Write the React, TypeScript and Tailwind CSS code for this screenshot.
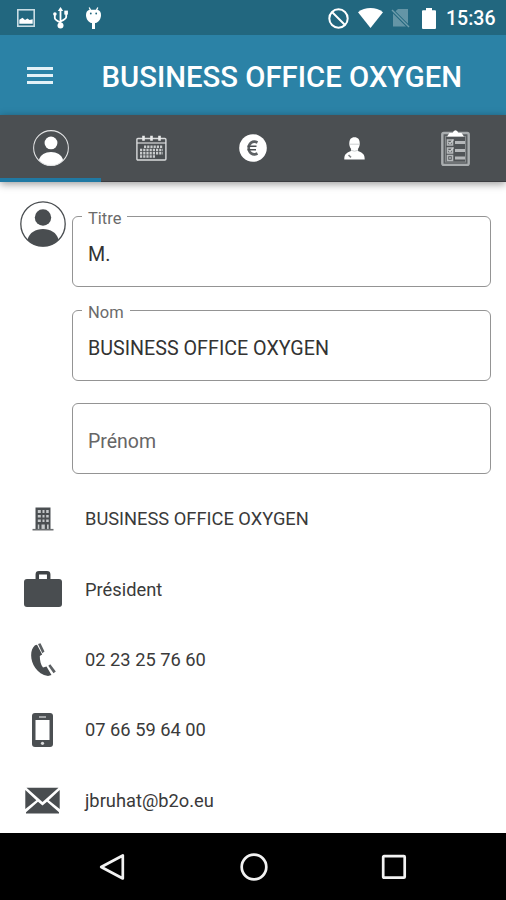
import React from "react";

const StatusBar = () => {
  return (
    <div className="flex h-[35px] items-center justify-between bg-[#22677f] pt-px pr-[11px] pl-[17px] text-white">
      <div className="flex items-center">
        <svg width="18" height="18" viewBox="0 0 18 18">
          <rect x="0.8" y="0.8" width="16.4" height="16.4" fill="none" stroke="#c9dde4" strokeWidth="1.6" />
          <path d="M2.300 14.800v-4l3.200-2 2.500 2.300 2.500-1.600 2 1.600 3.200-.8v4.500z" fill="#fff" />
        </svg>
        <svg className="ml-[18px]" width="15" height="22" viewBox="0 0 15 22">
          <path d="M7.500 2v17M1.800 8v3q0 2 5.700 4.500M13.200 6v4q0 2-5.700 4.500" fill="none" stroke="#fff" strokeWidth="1.8" />
          <path d="M7.500 0l2.700 4H4.800z" fill="#fff" />
          <circle cx="1.9" cy="7" r="1.8" fill="#fff" />
          <rect x="11.3" y="3.600" width="3.600" height="4" fill="#fff" />
          <circle cx="7.500" cy="18.500" r="3" fill="#fff" />
        </svg>
        <svg className="ml-[18px]" width="15" height="23" viewBox="0 0 15 23">
          <path d="M3.200.5l1.500 3M11.800.5l-1.500 3" stroke="#fff" strokeWidth="1.300" />
          <path d="M0 8q0-4.500 3.500-5.300h8Q15 3.500 15 8c0 4-2.500 7.500-5.500 8h-4C2.500 15.500 0 12 0 8z" fill="#fff" />
          <path d="M7.500 15v7" stroke="#fff" strokeWidth="3" />
          <circle cx="4.800" cy="6.500" r="0.9" fill="#22677f" />
          <circle cx="10.200" cy="6.500" r="0.9" fill="#22677f" />
        </svg>
      </div>
      <div className="flex items-center">
        <svg width="21" height="21" viewBox="0 0 21 21">
          <circle cx="10.500" cy="10.500" r="9.200" fill="none" stroke="#fff" strokeWidth="2" />
          <path d="M4 4l13 13" stroke="#fff" strokeWidth="2" />
        </svg>
        <svg className="ml-[9px]" width="25" height="20" viewBox="0 0 25 20">
          <path d="M12.500 20L0 4.200Q5.500 0 12.500 0T25 4.200z" fill="#fff" />
        </svg>
        <svg className="ml-[8px]" width="19" height="20" viewBox="0 0 19 20">
          <path d="M7 1H17v14.800L4.500 3.300zM2 5.500L15 18.500H2z" fill="#6495a6" />
          <path d="M1 2l17 17" stroke="#6f9dac" strokeWidth="1.500" />
        </svg>
        <svg className="ml-[12px]" width="14" height="21" viewBox="0 0 14 21">
          <path d="M4 0h6v2.300h3q1 0 1 1V20q0 1-1 1H1q-1 0-1-1V3.300q0-1 1-1h3z" fill="#fff" />
        </svg>
        <span className="ml-[10px] w-[49px] pt-[2px] text-[19.500px] leading-none font-medium">15:36</span>
      </div>
    </div>
  );
};

const AppBar = () => {
  return (
    <div className="flex h-20 items-center bg-[#2b82a6] pl-[27px]">
      <button className="flex w-[26px] flex-col gap-[4px]">
        <span className="h-[3px] bg-[#e3f1f7]" />
        <span className="h-[3px] bg-[#e3f1f7]" />
        <span className="h-[3px] bg-[#e3f1f7]" />
      </button>
      <h1 className="ml-[48.500px] pt-[5px] text-[29.300px] leading-none font-medium whitespace-nowrap text-white">
        BUSINESS OFFICE OXYGEN
      </h1>
    </div>
  );
};

type UserIconProps = { size: number; color: string; stroke: string };

const UserIcon = ({ size, color, stroke }: UserIconProps) => {
  return (
    <svg width={size} height={size} viewBox="0 0 46 46" className="shrink-0">
      <path d="M7.500 38.500C9.500 31.500 15.500 28 23 28s13.500 3.500 15.500 10.500Q32 45.500 23 45.500T7.500 38.500z" fill={color} />
      <circle cx="23" cy="16.500" r="8.200" fill={color} />
      <circle cx="23" cy="23" r="22.200" fill="none" stroke={stroke} strokeWidth="1.300" />
    </svg>
  );
};

const CalendarIcon = () => {
  return (
    <svg width="31" height="27" viewBox="0 0 31 27">
      <rect x="0.900" y="3.500" width="29" height="21.500" rx="1" fill="none" stroke="#d9dbdc" strokeWidth="1.400" />
      <path d="M1 8h29" stroke="#d9dbdc" strokeWidth="1.200" />
      <path d="M7.500.8v5M15.500.8v5M23.500.8v5" stroke="#e9eaea" strokeWidth="2.600" />
      <path d="M8 11.700h19M4 15h23M4 18.300h23M4 21.500h15" stroke="#c9cccd" strokeWidth="2.500" strokeDasharray="2.200 1" />
    </svg>
  );
};

const EuroIcon = () => {
  return (
    <svg width="28" height="28" viewBox="0 0 28 28">
      <circle cx="14" cy="14" r="13.800" fill="#fff" />
      <path d="M18.500 8.500C13.500 6 9.700 9.500 9.700 14s3.800 8 8.800 5.500" fill="none" stroke="#5d6164" strokeWidth="2.600" />
      <path d="M8.500 12.300H17.500M8.500 15.700H17" stroke="#4b4f52" strokeWidth="1.600" />
    </svg>
  );
};

const PersonIcon = () => {
  return (
    <svg width="21" height="23" viewBox="0 0 21 23">
      <path d="M5.300 6.500C5.300 2.500 7 .3 10.500.3s5.200 2.200 5.200 6.200c0 4-2.200 7.200-5.200 7.200S5.300 10.500 5.300 6.500z" fill="#fff" />
      <path d="M.3 22.500c0-4.500 1.200-6.500 6.700-8.500V12h7v2c5.500 2 6.700 4 6.700 8.500z" fill="#fff" />
      <path d="M5.500 7.200h10M6.800 13.200q3.700 2 7.400 0" fill="none" stroke="#c5c8ca" strokeWidth="0.900" />
      <path d="M4.500 18l2.500 2.300" stroke="#7d8184" strokeWidth="1.600" />
    </svg>
  );
};

const ClipboardIcon = () => {
  return (
    <svg width="29" height="36" viewBox="0 0 29 36">
      <rect x="1.300" y="3" width="26.400" height="32" rx="1.500" fill="#5a5e61" stroke="#a9adaf" strokeWidth="2.400" />
      <rect x="4.500" y="6.500" width="20" height="25.500" fill="#505457" stroke="#85898b" strokeWidth="1" />
      <path d="M6 6.500l2.500-3.500h3.200Q12.500.3 14.500.3T17.300 3h3.200L23 6.500z" fill="#fff" />
      <path d="M14 12.500h10M14 20.500h10M14 28h10" stroke="#b5b8ba" strokeWidth="3" />
      <path d="M6.500 10h5v5h-5zM6.500 18h5v5h-5zM6.500 25.500h5v5h-5z" fill="none" stroke="#b5b8ba" strokeWidth="1.600" />
      <path d="M7.500 12l1.500 1.500 3.500-4M7.500 20l1.500 1.500 3.500-4M9 27v2" fill="none" stroke="#c9cccd" strokeWidth="1.200" />
    </svg>
  );
};

const tabs = [
  { id: "profile", icon: <UserIcon size={36} color="#fff" stroke="#e4e5e6" /> },
  { id: "calendar", icon: <CalendarIcon /> },
  { id: "billing", icon: <EuroIcon /> },
  { id: "contact", icon: <PersonIcon /> },
  { id: "tasks", icon: <ClipboardIcon /> },
];

const TabBar = ({ active }: { active: string }) => {
  return (
    <div className="grid h-[67px] grid-cols-5 bg-[#4b4f52] shadow-[0_2px_8px_rgba(0,0,0,0.4)]">
      {tabs.map((tab) => (
        <button
          key={tab.id}
          className={
            tab.id === active
              ? "flex items-center justify-center border-b-[4px] border-[#2079a3] pt-[3px]"
              : "flex items-center justify-center border-b border-[#3b3c40]"
          }
        >
          {tab.icon}
        </button>
      ))}
    </div>
  );
};

const Field = ({ label, value }: { label: string; value?: string }) => {
  if (!value) {
    return (
      <div className="-mt-px flex h-[71px] items-center rounded-[6px] border border-[#949494] px-[15px] pt-[7px] text-[19.500px] text-[#666]">
        {label}
      </div>
    );
  }
  return (
    <fieldset className="-mt-[9px] h-[80px] rounded-[6px] border border-[#949494] px-[9px]">
      <legend className="h-[19px] px-[6px] text-[16.500px] leading-[23px] text-[#6b6b6b]">{label}</legend>
      <div className="pt-[17px] pl-[6px] text-[19.700px] leading-[24px] text-[#333]">{value}</div>
    </fieldset>
  );
};

const BuildingIcon = () => {
  return (
    <svg width="22" height="24" viewBox="0 0 22 24">
      <path d="M3.500.5h15V23h-15z" fill="#4b4f52" />
      <path d="M5.800 3h3v3h-3zM10.500 3h2v3h-2zM14.200 3h2.500v3h-2.500zM5.800 8h3v2.500h-3zM10.500 8h2v2.500h-2zM14.200 8h2.500v2.500h-2.500zM5.800 12.500h3V15h-3zM10.500 12.500h2V15h-2zM14.200 12.500h2.500V15h-2.500zM5.800 17.500h1.500V22H5.800zM9.500 17.500h3.300V22H9.500zM15 17.500h1.700V22H15z" fill="#c5c8ca" />
      <path d="M.5 22.700h21" stroke="#6c6f71" strokeWidth="1.600" />
    </svg>
  );
};

const BriefcaseIcon = () => {
  return (
    <svg width="38" height="36" viewBox="0 0 38 36">
      <path d="M13.300 9V3.500q0-1.700 1.700-1.700h8q1.700 0 1.700 1.700V9" fill="none" stroke="#3f4346" strokeWidth="3.500" />
      <rect x="0" y="8" width="38" height="28" rx="3" fill="#494d50" />
    </svg>
  );
};

const PhoneIcon = () => {
  return (
    <svg width="26" height="34" viewBox="0 0 26 34">
      <path d="M5 2.300C-3 9 1.500 30 18 33l3.500-1-5-8.500-3.500 1C10.800 22 9.800 17.500 9.800 13l2.400-1.500L7 1.800z" fill="#494d50" />
      <path d="M8 1l2.500-.8 4 8.300-2.200 1.800zM18.300 22.800l2-1.500 5.500 7.200-2.300 1.800z" fill="#5c6063" />
    </svg>
  );
};

const MobileIcon = () => {
  return (
    <svg width="21" height="34" viewBox="0 0 21 34">
      <rect width="21" height="34" rx="3" fill="#4b4f52" />
      <rect x="3.500" y="7" width="14" height="20" fill="#fff" />
      <path d="M7 4h7" stroke="#c0c2c4" strokeWidth="1.500" />
      <circle cx="10.500" cy="30.300" r="1.600" fill="#dadbdc" />
    </svg>
  );
};

const MailIcon = () => {
  return (
    <svg width="35" height="27" viewBox="0 0 35 27">
      <path d="M1.500.7h32L17.500 15zM.3 3l11 10.200L.3 22zM34.700 3l-11 10.200 11 8.800zM13 14.800l4.500 3.800 4.500-3.800 12 10.500v1.200H1v-1.200z" fill="#494d50" />
    </svg>
  );
};

const contacts = [
  { text: "BUSINESS OFFICE OXYGEN", icon: <BuildingIcon /> },
  { text: "Président", icon: <BriefcaseIcon /> },
  { text: "02 23 25 76 60", icon: <PhoneIcon /> },
  { text: "07 66 59 64 00", icon: <MobileIcon /> },
  { text: "jbruhat@b2o.eu", icon: <MailIcon /> },
];

const NavBar = () => {
  return (
    <div className="grid h-[67px] grid-cols-[112.500px_281px_112.500px] bg-black">
      <div className="flex items-center justify-end">
        <svg className="-mr-[12px]" width="26" height="28" viewBox="0 0 26 28">
          <path d="M23.800 2.500v23L2.200 14z" fill="none" stroke="#f2f2f2" strokeWidth="2.700" strokeLinejoin="round" />
        </svg>
      </div>
      <div className="flex items-center justify-center pl-px">
        <svg width="28" height="28" viewBox="0 0 28 28">
          <circle cx="14" cy="14" r="12.300" fill="none" stroke="#f2f2f2" strokeWidth="2.700" />
        </svg>
      </div>
      <div className="flex items-center">
        <svg className="-ml-[12.500px]" width="26" height="26" viewBox="0 0 26 26">
          <rect x="2.200" y="2.200" width="21.500" height="21.500" rx="0.800" fill="none" stroke="#f2f2f2" strokeWidth="2.700" />
        </svg>
      </div>
    </div>
  );
};

const App = () => {
  return (
    <div className="flex h-[900px] w-[506px] flex-col overflow-hidden bg-white font-[Roboto,sans-serif]">
      <StatusBar />
      <AppBar />
      <TabBar active="profile" />
      <main className="min-h-0 flex-1">
        <div className="flex pt-[19px] pr-[15px] pl-[20px]">
          <UserIcon size={46} color="#494d50" stroke="#494d50" />
          <div className="ml-[6px] flex flex-1 flex-col gap-[23px] pt-[15px]">
            <Field label="Titre" value="M." />
            <Field label="Nom" value="BUSINESS OFFICE OXYGEN" />
            <Field label="Prénom" />
          </div>
        </div>
        <ul className="mt-[10px]">
          {contacts.map((contact, index) => (
            <li key={index} className="flex h-[70.300px] items-center">
              <div className="flex w-[85px] justify-center">{contact.icon}</div>
              <span className="text-[18.300px] text-[#3a3a3a]">{contact.text}</span>
            </li>
          ))}
        </ul>
      </main>
      <NavBar />
    </div>
  );
};

export default App;
